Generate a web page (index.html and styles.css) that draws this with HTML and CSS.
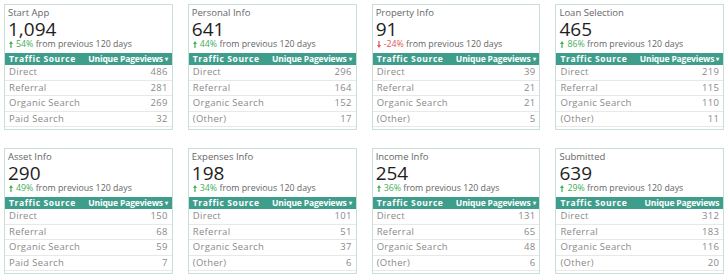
FILE: index.html
```html
<!DOCTYPE html>
<html lang="en">
<head>
    <meta charset="UTF-8">
    <title>Funnel Steps</title>
    <link rel="stylesheet" href="styles.css">
</head>
<body>
    <div class="grid">
        <div class="card">
            <div class="step">Start App</div>
            <div class="total">1,094</div>
            <div class="change up"><svg class="arrow" viewBox="0 0 4 7"><path d="M2 0 L4 3 H2.6 V7 H1.4 V3 H0 Z"/></svg><span class="pct">54%</span>&nbsp;from previous 120 days</div>
            <table>
                <thead><tr><th>Traffic Source</th><th class="num">Unique Pageviews <span class="caret">&#9662;</span></th></tr></thead>
                <tbody>
                    <tr><td>Direct</td><td class="num">486</td></tr>
                    <tr><td>Referral</td><td class="num">281</td></tr>
                    <tr><td>Organic Search</td><td class="num">269</td></tr>
                    <tr><td>Paid Search</td><td class="num">32</td></tr>
                </tbody>
            </table>
        </div>
        <div class="card">
            <div class="step">Personal Info</div>
            <div class="total">641</div>
            <div class="change up"><svg class="arrow" viewBox="0 0 4 7"><path d="M2 0 L4 3 H2.6 V7 H1.4 V3 H0 Z"/></svg><span class="pct">44%</span>&nbsp;from previous 120 days</div>
            <table>
                <thead><tr><th>Traffic Source</th><th class="num">Unique Pageviews <span class="caret">&#9662;</span></th></tr></thead>
                <tbody>
                    <tr><td>Direct</td><td class="num">296</td></tr>
                    <tr><td>Referral</td><td class="num">164</td></tr>
                    <tr><td>Organic Search</td><td class="num">152</td></tr>
                    <tr><td>(Other)</td><td class="num">17</td></tr>
                </tbody>
            </table>
        </div>
        <div class="card">
            <div class="step">Property Info</div>
            <div class="total">91</div>
            <div class="change down"><svg class="arrow" viewBox="0 0 4 7"><path d="M2 7 L4 4 H2.6 V0 H1.4 V4 H0 Z"/></svg><span class="pct">-24%</span>&nbsp;from previous 120 days</div>
            <table>
                <thead><tr><th>Traffic Source</th><th class="num">Unique Pageviews <span class="caret">&#9662;</span></th></tr></thead>
                <tbody>
                    <tr><td>Direct</td><td class="num">39</td></tr>
                    <tr><td>Referral</td><td class="num">21</td></tr>
                    <tr><td>Organic Search</td><td class="num">21</td></tr>
                    <tr><td>(Other)</td><td class="num">5</td></tr>
                </tbody>
            </table>
        </div>
        <div class="card">
            <div class="step">Loan Selection</div>
            <div class="total">465</div>
            <div class="change up"><svg class="arrow" viewBox="0 0 4 7"><path d="M2 0 L4 3 H2.6 V7 H1.4 V3 H0 Z"/></svg><span class="pct">86%</span>&nbsp;from previous 120 days</div>
            <table>
                <thead><tr><th>Traffic Source</th><th class="num">Unique Pageviews <span class="caret">&#9662;</span></th></tr></thead>
                <tbody>
                    <tr><td>Direct</td><td class="num">219</td></tr>
                    <tr><td>Referral</td><td class="num">115</td></tr>
                    <tr><td>Organic Search</td><td class="num">110</td></tr>
                    <tr><td>(Other)</td><td class="num">11</td></tr>
                </tbody>
            </table>
        </div>
        <div class="card">
            <div class="step">Asset Info</div>
            <div class="total">290</div>
            <div class="change up"><svg class="arrow" viewBox="0 0 4 7"><path d="M2 0 L4 3 H2.6 V7 H1.4 V3 H0 Z"/></svg><span class="pct">49%</span>&nbsp;from previous 120 days</div>
            <table>
                <thead><tr><th>Traffic Source</th><th class="num">Unique Pageviews <span class="caret">&#9662;</span></th></tr></thead>
                <tbody>
                    <tr><td>Direct</td><td class="num">150</td></tr>
                    <tr><td>Referral</td><td class="num">68</td></tr>
                    <tr><td>Organic Search</td><td class="num">59</td></tr>
                    <tr><td>Paid Search</td><td class="num">7</td></tr>
                </tbody>
            </table>
        </div>
        <div class="card">
            <div class="step">Expenses Info</div>
            <div class="total">198</div>
            <div class="change up"><svg class="arrow" viewBox="0 0 4 7"><path d="M2 0 L4 3 H2.6 V7 H1.4 V3 H0 Z"/></svg><span class="pct">34%</span>&nbsp;from previous 120 days</div>
            <table>
                <thead><tr><th>Traffic Source</th><th class="num">Unique Pageviews <span class="caret">&#9662;</span></th></tr></thead>
                <tbody>
                    <tr><td>Direct</td><td class="num">101</td></tr>
                    <tr><td>Referral</td><td class="num">51</td></tr>
                    <tr><td>Organic Search</td><td class="num">37</td></tr>
                    <tr><td>(Other)</td><td class="num">6</td></tr>
                </tbody>
            </table>
        </div>
        <div class="card">
            <div class="step">Income Info</div>
            <div class="total">254</div>
            <div class="change up"><svg class="arrow" viewBox="0 0 4 7"><path d="M2 0 L4 3 H2.6 V7 H1.4 V3 H0 Z"/></svg><span class="pct">36%</span>&nbsp;from previous 120 days</div>
            <table>
                <thead><tr><th>Traffic Source</th><th class="num">Unique Pageviews <span class="caret">&#9662;</span></th></tr></thead>
                <tbody>
                    <tr><td>Direct</td><td class="num">131</td></tr>
                    <tr><td>Referral</td><td class="num">65</td></tr>
                    <tr><td>Organic Search</td><td class="num">48</td></tr>
                    <tr><td>(Other)</td><td class="num">6</td></tr>
                </tbody>
            </table>
        </div>
        <div class="card">
            <div class="step">Submitted</div>
            <div class="total">639</div>
            <div class="change up"><svg class="arrow" viewBox="0 0 4 7"><path d="M2 0 L4 3 H2.6 V7 H1.4 V3 H0 Z"/></svg><span class="pct">29%</span>&nbsp;from previous 120 days</div>
            <table>
                <thead><tr><th>Traffic Source</th><th class="num">Unique Pageviews</th></tr></thead>
                <tbody>
                    <tr><td>Direct</td><td class="num">312</td></tr>
                    <tr><td>Referral</td><td class="num">183</td></tr>
                    <tr><td>Organic Search</td><td class="num">116</td></tr>
                    <tr><td>(Other)</td><td class="num">20</td></tr>
                </tbody>
            </table>
        </div>
    </div>
</body>
</html>
```

FILE: styles.css
```css
body {
    margin: 0;
    padding: 4px;
    background: #fff;
    font-family: 'Open Sans', sans-serif;
}
.grid {
    display: grid;
    grid-template-columns: repeat(4, 1fr);
    column-gap: 15px;
    row-gap: 18px;
}
.card {
    border: 1px solid #c9dfda;
    padding: 2px 0 2px;
}
.step {
    font-size: 9.5px;
    line-height: 12px;
    height: 12px;
    color: #666;
    padding: 0 3px;
}
.total {
    font-size: 19px;
    line-height: 20px;
    height: 20px;
    color: #1e1e1e;
    padding: 0 3px;
}
.change {
    display: flex;
    align-items: center;
    font-size: 8.8px;
    line-height: 10px;
    height: 10px;
    margin-bottom: 4px;
    color: #666;
    padding: 0 4px;
    white-space: nowrap;
}
.change .arrow {
    width: 4px;
    height: 7px;
    margin-right: 3px;
}
.up .arrow { fill: #3fae5a; }
.down .arrow { fill: #e05555; }
.up .pct { color: #3fae5a; }
.down .pct { color: #e05555; }
table {
    width: 100%;
    border-collapse: collapse;
}
th {
    background-color: #3f9e8b;
    color: #fff;
    font-size: 8.5px;
    font-weight: bold;
    line-height: 12px;
    text-align: left;
    padding: 0 4px;
    height: 12px;
    white-space: nowrap;
}
th:first-child {
    letter-spacing: 0.6px;
}
th.num {
    letter-spacing: -0.15px;
}
td {
    color: #8a8a8a;
    font-size: 9.5px;
    line-height: 14.5px;
    letter-spacing: 0.3px;
    padding: 0 4px;
    height: 14.5px;
    border-bottom: 1px solid #e8e8e8;
    white-space: nowrap;
}
.num {
    text-align: right;
}
.caret {
    font-size: 6px;
    vertical-align: 1px;
}
```
